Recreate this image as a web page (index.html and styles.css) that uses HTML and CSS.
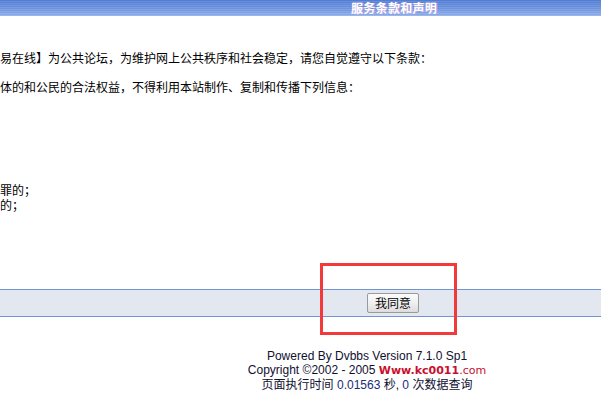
FILE: index.html
```html
<!DOCTYPE html>
<html lang="zh">
<head>
<meta charset="utf-8">
<title>服务条款和声明</title>
<link rel="stylesheet" href="styles.css">
</head>
<body>
<div class="header"><span class="title">服务条款和声明</span></div>
<div class="content">
  <p class="line first">易在线】为公共论坛，为维护网上公共秩序和社会稳定，请您自觉遵守以下条款：</p>
  <p class="line second">体的和公民的合法权益，不得利用本站制作、复制和传播下列信息：</p>
  <p class="line list">罪的；</p>
  <p class="line">的；</p>
</div>
<div class="agree-bar">
  <button class="agree-btn" type="button">我同意</button>
  <div class="highlight"></div>
</div>
<div class="footer">
  <div>Powered By Dvbbs Version 7.1.0 Sp1</div>
  <div>Copyright ©2002 - 2005 <a class="site"><b>Www.kc0011</b>.com</a></div>
  <div>页面执行时间 <span class="num">0.01563</span> 秒, <span class="num">0</span> 次数据查询</div>
</div>
</body>
</html>
```
FILE: styles.css
```css
html, body {
  margin: 0;
  padding: 0;
  background: #ffffff;
}
body {
  font-family: "Noto Sans CJK SC", "Liberation Sans", sans-serif;
  font-size: 12px;
  color: #000;
  width: 601px;
  overflow: hidden;
}
.header {
  height: 16px;
  background:
    repeating-linear-gradient(to bottom, rgba(255,255,255,0) 0, rgba(255,255,255,0) 1px, rgba(255,255,255,0.12) 1px, rgba(255,255,255,0.12) 2px),
    linear-gradient(to bottom, #4f7bd4 0%, #6a90dd 50%, #8eaeea 100%);
  padding-left: 351px;
  box-sizing: border-box;
}
.title {
  color: #ffffff;
  font-weight: bold;
  font-size: 12px;
  line-height: 15px;
  display: block;
  text-shadow: 1px 0 0 #c9a0e0;
  letter-spacing: 0.3px;
}
.content {
  padding-top: 34px;
}
.line {
  margin: 0;
  line-height: 15px;
  white-space: nowrap;
}
.first {
  margin-bottom: 14px;
}
.second {
  margin-bottom: 88px;
}
.agree-bar {
  position: relative;
  margin-top: 77px;
  border-top: 1px solid #6f95d2;
  border-bottom: 1px solid #6f95d2;
  background: #e3e7ef;
  padding-left: 367px;
  padding-top: 3px;
  height: 23px;
}
.agree-btn {
  display: block;
  width: 52px;
  height: 20px;
  padding: 0;
  font-family: "Noto Sans CJK SC", sans-serif;
  font-size: 12px;
  line-height: 18px;
  color: #000;
  border: 1px solid #9a9a9a;
  border-radius: 2px;
  background: linear-gradient(to bottom, #fbfbfb 0%, #f0f0f0 50%, #dcdcdc 100%);
}
.highlight {
  position: absolute;
  left: 320px;
  top: -27px;
  width: 131px;
  height: 66px;
  border: 3px solid #f23a3a;
}
.footer {
  margin-top: 32px;
  padding-left: 133px;
  text-align: center;
  font-family: "Liberation Sans", "Noto Sans CJK SC", sans-serif;
  font-size: 12px;
  line-height: 14px;
  color: #101030;
}
.site {
  color: #c8102e;
  font-family: "DejaVu Sans", "Liberation Sans", sans-serif;
  font-size: 11px;
}
.site b {
  font-weight: bold;
}
.num {
  color: #1a2a7a;
}
```
